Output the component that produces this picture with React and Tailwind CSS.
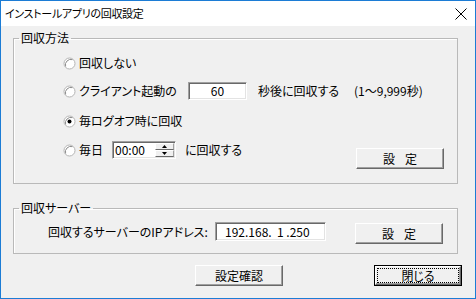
import React from 'react';

const jp = "font-['Noto_Sans_CJK_JP',sans-serif] [font-feature-settings:'palt']";

function Radio({ checked }) {
  return (
    <svg width="13" height="13" viewBox="0 0 13 13" className="shrink-0">
      <circle cx="6.5" cy="6.5" r="5.5" fill="#ffffff" stroke="#b4b4b4" strokeWidth="1" />
      <path d="M2.6 9.4 A5.5 5.5 0 0 1 9.4 2.6" fill="none" stroke="#8c8c8c" strokeWidth="1" />
      {checked && <circle cx="6.5" cy="6.5" r="2" fill="#000000" />}
    </svg>
  );
}

function Btn({ children, def }) {
  if (def) {
    return (
      <button className="w-[88px] h-[21px] border border-black bg-[#f0f0f0] p-0 flex">
        <div className="flex-1 border-t border-l border-t-white border-l-white border-b border-r border-b-[#696969] border-r-[#696969] shadow-[inset_-1px_-1px_0_#a0a0a0] p-[1px] flex">
          <div className="flex-1 border border-dotted border-black flex items-center justify-center">{children}</div>
        </div>
      </button>
    );
  }
  return (
    <button className="w-[88px] h-[21px] bg-[#f0f0f0] border-t border-l border-t-white border-l-white border-b border-r border-b-[#696969] border-r-[#696969] shadow-[inset_-1px_-1px_0_#a0a0a0] flex items-center justify-center p-0">
      {children}
    </button>
  );
}

function SetLabel() {
  return (
    <span className="flex gap-[10px]">
      <span>設</span>
      <span>定</span>
    </span>
  );
}

const sunken = 'bg-white border-t border-l border-t-[#a0a0a0] border-l-[#a0a0a0] border-b border-r border-b-white border-r-white shadow-[inset_1px_1px_0_#696969,inset_-1px_-1px_0_#e3e3e3]';

function SpinBtn({ up }) {
  return (
    <div className="flex-1 bg-[#f0f0f0] border-t border-l border-t-white border-l-white border-b border-r border-b-[#696969] border-r-[#a0a0a0] flex items-center justify-center">
      <svg width="5" height="3" viewBox="0 0 5 3">
        {up ? <path d="M2.5 0 L5 3 L0 3 Z" fill="#000" /> : <path d="M0 0 L5 0 L2.5 3 Z" fill="#000" />}
      </svg>
    </div>
  );
}

export default function App() {
  return (
    <div className={`w-[476px] h-[299px] border border-[#1c7cd5] bg-[#f0f0f0] flex flex-col text-[12px] leading-none text-black ${jp}`}>
      {/* title bar */}
      <div className="h-[25px] shrink-0 bg-white flex items-center justify-between pl-[4px] pr-[8px]">
        <span className="text-[11px] tracking-[-0.3px]">インストールアプリの回収設定</span>
        <svg width="12" height="12" viewBox="0 0 12 12">
          <path d="M0.5 0.5 L11.5 11.5 M11.5 0.5 L0.5 11.5" stroke="#000" strokeWidth="1" />
        </svg>
      </div>

      <div className="flex flex-col pl-[12px]">
        {/* 回収方法 */}
        <fieldset className="w-[445px] h-[152px] mt-[6px] border border-[#b9b9b9] shadow-[inset_1px_1px_0_#ffffff]">
          <legend className="ml-[5px] px-[2px] leading-[12px]">回収方法</legend>

          <div className="flex flex-col pl-[49px]">
            <div className="h-[20px] mt-[9px] flex items-center">
              <Radio />
              <span className="ml-[3px]">回収しない</span>
            </div>

            <div className="h-[20px] mt-[8px] flex items-center">
              <Radio />
              <span className="ml-[3px] w-[109px]">クライアント起動の</span>
              <div className={`w-[59px] h-[18px] flex items-center justify-center ${sunken}`}>60</div>
              <span className="ml-[11px] w-[96px]">秒後に回収する</span>
              <span>(1～9,999秒)</span>
            </div>

            <div className="h-[20px] mt-[10px] flex items-center">
              <Radio checked />
              <span className="ml-[3px]">毎ログオフ時に回収</span>
            </div>

            <div className="mt-[9px] flex items-start">
              <div className="h-[20px] flex items-center">
                <Radio />
                <span className="ml-[3px] w-[33px]">毎日</span>
                <div className={`w-[64px] h-[18px] flex items-stretch ${sunken}`}>
                  <span className="flex-1 flex items-center pl-[2px]">00:00</span>
                  <div className="w-[20px] flex flex-col py-[1px] pr-[1px]">
                    <SpinBtn up />
                    <SpinBtn />
                  </div>
                </div>
                <span className="ml-[9px]">に回収する</span>
              </div>
              <div className="ml-auto mr-[13px] mt-[8px]">
                <Btn>
                  <SetLabel />
                </Btn>
              </div>
            </div>
          </div>
        </fieldset>

        {/* 回収サーバー */}
        <fieldset className="w-[445px] h-[52px] mt-[18px] border border-[#b9b9b9] shadow-[inset_1px_1px_0_#ffffff]">
          <legend className="ml-[5px] px-[2px] leading-[12px]">回収サーバー</legend>
          <div className="flex items-start pl-[34px] mt-[8px]">
            <span className="w-[167px] h-[19px] flex items-center">回収するサーバーのIPアドレス:</span>
            <div className={`w-[111px] h-[19px] flex items-center pl-[9px] whitespace-pre ${sunken}`}>192.168.  1 .250</div>
            <div className="ml-[29px] mt-[1px]">
              <Btn>
                <SetLabel />
              </Btn>
            </div>
          </div>
        </fieldset>

        {/* bottom buttons */}
        <div className="flex mt-[11px]">
          <div className="ml-[182px]">
            <Btn>設定確認</Btn>
          </div>
          <div className="ml-[91px]">
            <Btn def>閉じる</Btn>
          </div>
        </div>
      </div>
    </div>
  );
}
